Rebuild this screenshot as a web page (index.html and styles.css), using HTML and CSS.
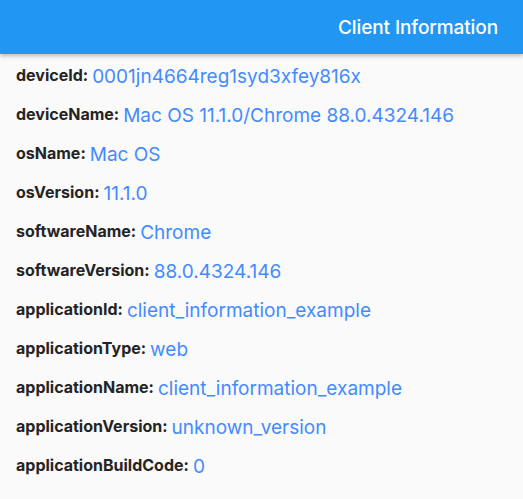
FILE: index.html
```html
<!DOCTYPE html>
<html lang="en">
<head>
  <meta charset="UTF-8">
  <meta name="viewport" content="width=device-width, initial-scale=1.0">
  <title>Client Information</title>
  <link rel="stylesheet" href="styles.css">
</head>
<body>

<div class="app-bar">
  <h1 class="title">Client Information</h1>
</div>

<div class="info-list">
  <div class="info-row"><span class="key">deviceId:</span><span class="value">0001jn4664reg1syd3xfey816x</span></div>
  <div class="info-row"><span class="key">deviceName:</span><span class="value">Mac OS 11.1.0/Chrome 88.0.4324.146</span></div>
  <div class="info-row"><span class="key">osName:</span><span class="value">Mac OS</span></div>
  <div class="info-row"><span class="key">osVersion:</span><span class="value">11.1.0</span></div>
  <div class="info-row"><span class="key">softwareName:</span><span class="value">Chrome</span></div>
  <div class="info-row"><span class="key">softwareVersion:</span><span class="value">88.0.4324.146</span></div>
  <div class="info-row"><span class="key">applicationId:</span><span class="value">client_information_example</span></div>
  <div class="info-row"><span class="key">applicationType:</span><span class="value">web</span></div>
  <div class="info-row"><span class="key">applicationName:</span><span class="value">client_information_example</span></div>
  <div class="info-row"><span class="key">applicationVersion:</span><span class="value">unknown_version</span></div>
  <div class="info-row"><span class="key">applicationBuildCode:</span><span class="value">0</span></div>
</div>

</body>
</html>
```

FILE: styles.css
```css
body {
  margin: 0;
  background-color: #fafafa;
  font-family: Inter, Roboto, sans-serif;
}
.app-bar {
  height: 54px;
  background-color: #2196f3;
  display: flex;
  align-items: center;
  justify-content: flex-end;
  padding: 0 25px;
  box-shadow: 0 2px 4px rgba(0, 0, 0, 0.25);
}
.title {
  margin: 0;
  color: white;
  font-size: 19px;
  font-weight: 500;
  letter-spacing: -0.1px;
}
.info-list {
  padding: 11px 16px;
}
.info-row {
  display: flex;
  align-items: flex-start;
  gap: 4px;
  height: 39px;
}
.key {
  font-size: 16px;
  font-weight: 700;
  color: #242424;
}
.value {
  font-size: 19px;
  color: #448aff;
}
```
